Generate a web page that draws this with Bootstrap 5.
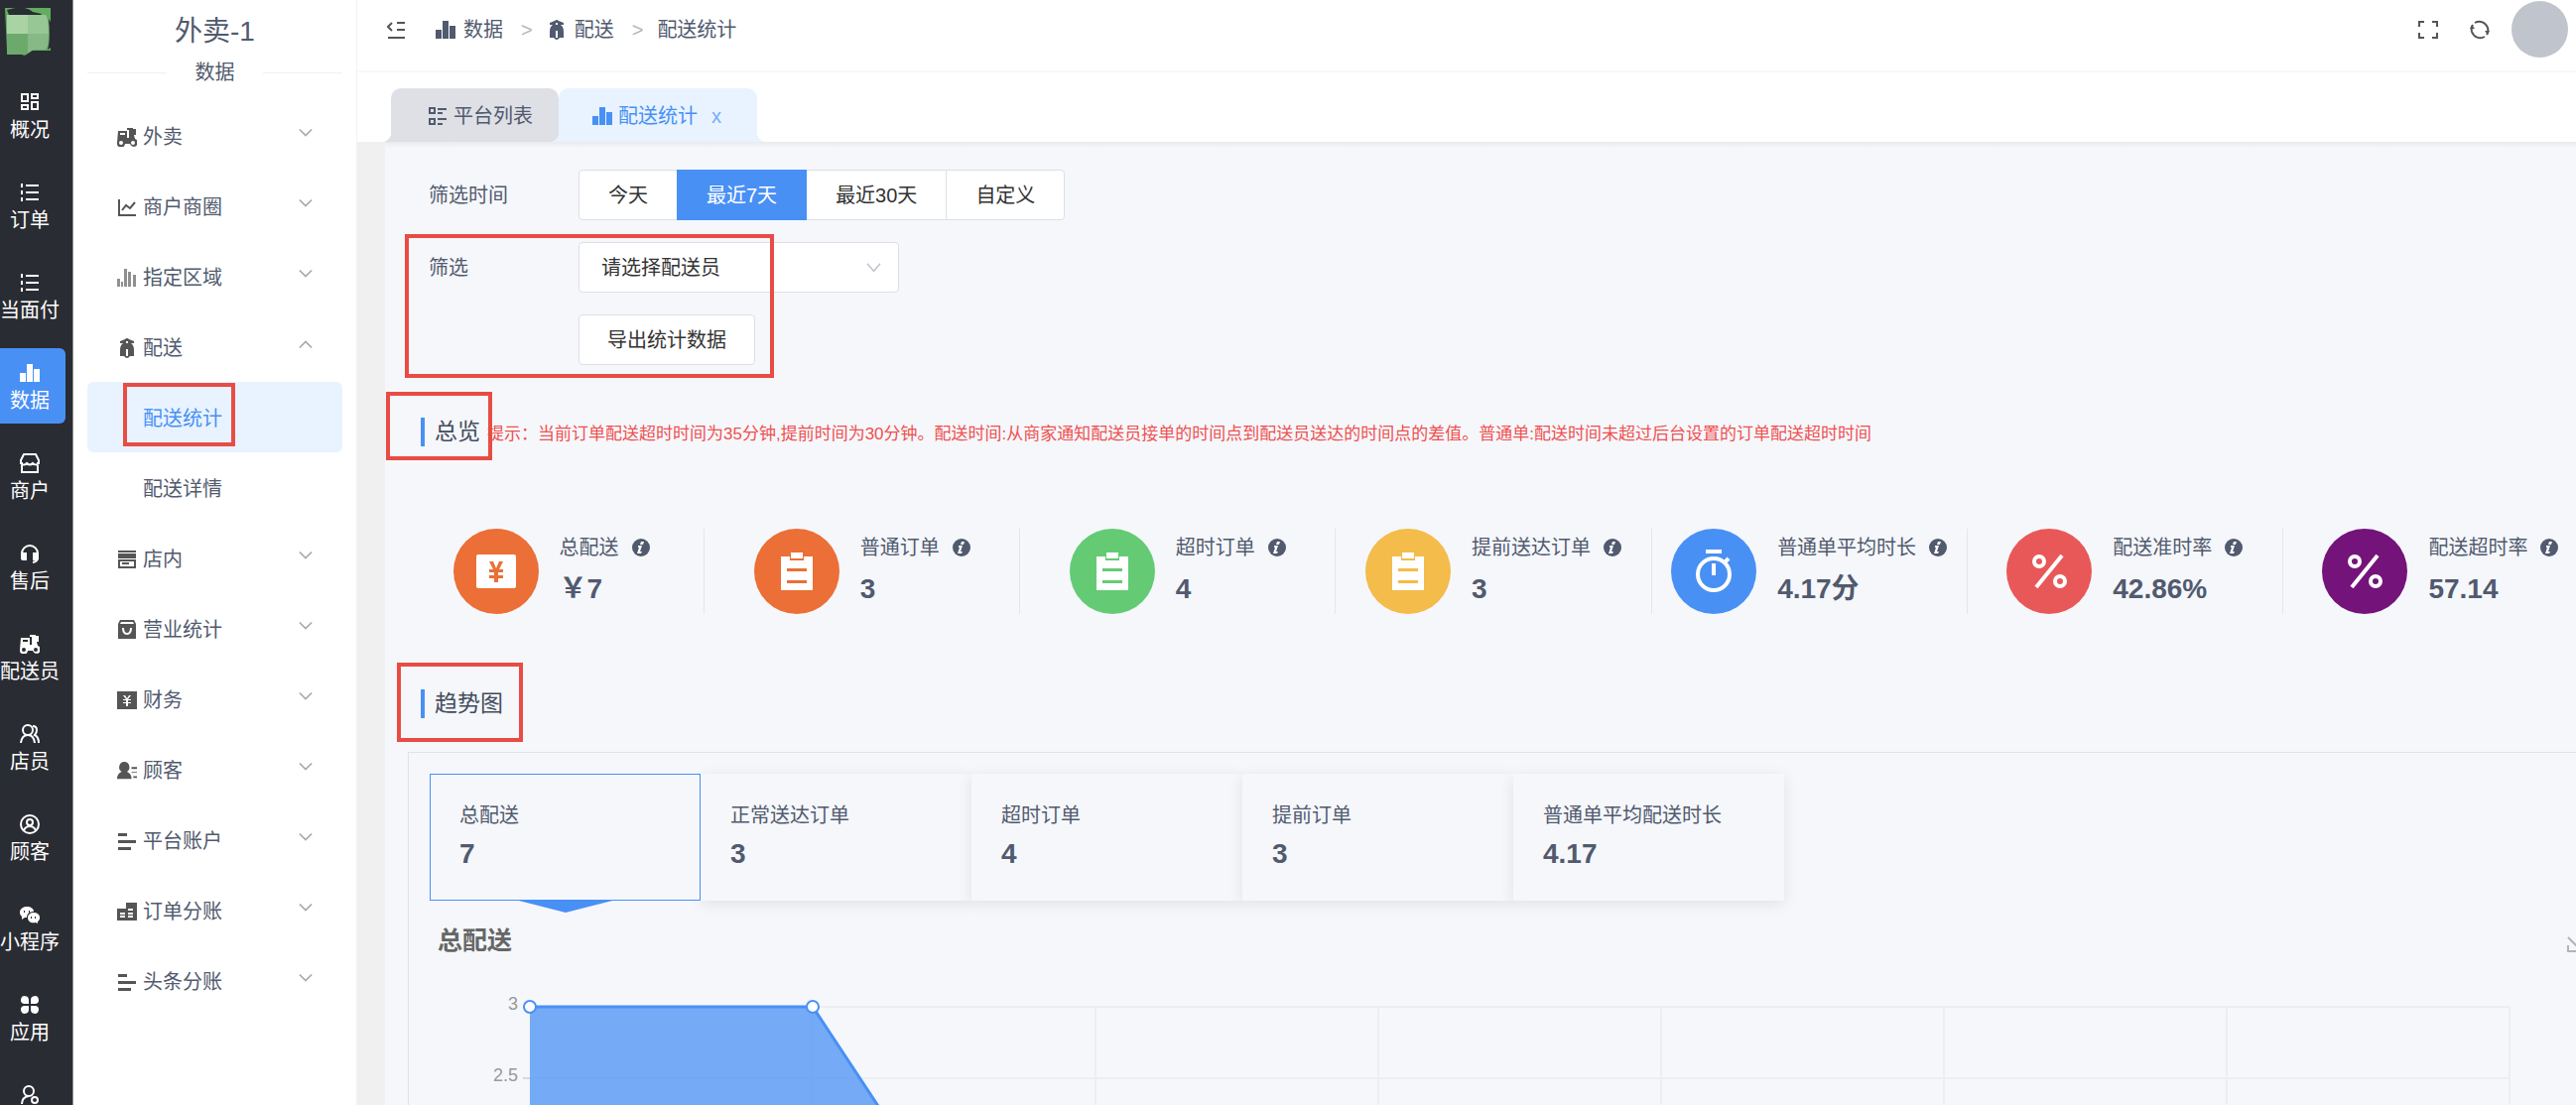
<!DOCTYPE html>
<html lang="zh-CN">
<head>
<meta charset="utf-8">
<meta name="viewport" content="width=device-width, initial-scale=1">
<title>配送统计</title>
<link href="https://cdn.jsdelivr.net/npm/bootstrap@5.3.0/dist/css/bootstrap.min.css" rel="stylesheet">
<style>
:root{--ink:#515a6e;--brand:#4990f5;--pale:#e8f3ff;--red:#e84c44;--page:#f5f7fb}
body{font:20px/28px "Liberation Sans","Noto Sans CJK SC",sans-serif;color:var(--ink);background:#fff}
a{color:inherit;text-decoration:none}
svg{display:block;flex:none}
.ico{width:20px;height:20px;fill:currentColor}
.shell{height:100vh}
/* dark rail */
.rail{width:74px;background:#2a2c33;border-right:1px solid #8f9196}
.logo{width:46px;height:50px;margin:7px 0 21px 5px}
.rail-list{gap:15px}
.rail-item{width:72px;height:76px;margin-left:-6px;padding-top:15px;gap:4px;color:#fff;border-radius:6px}
.rail-item.on{background:var(--brand)}
/* secondary menu */
.side{width:286px;padding:0 14px;border-right:1px solid #f2f2f2}
.side h1{font-size:28px;line-height:36px;margin:14px 0 9px;font-weight:400}
.rule{flex:0 0 80px;height:1px;background:#f0f0f2}
.menu{margin-top:14px}
.menu-item{height:71px;padding:3px 28px 0 30px;border-radius:6px}
.menu-item .ico{color:#555;margin-right:6px}
.menu-item .chev{color:#aaa;width:14px;height:14px;margin:-8px 2px 0 auto}
.menu-item.leaf{padding-left:56px}
.menu-item.on{background:var(--pale);color:var(--brand)}
/* red marker frames */
.framed{position:relative}
.framed::after{content:"";position:absolute;border:4px solid var(--red);pointer-events:none;z-index:3}
.frame-menu::after{left:36px;top:1px;width:113px;height:64px}
.frame-form::after{left:-24px;top:-8px;width:372px;height:145px}
.frame-over::after{left:-39px;top:-26px;width:107px;height:69px}
.frame-trend::after{left:-28px;top:-27px;width:127px;height:80px}
/* top bars */
.topbar{height:73px;padding:0 8px 12px 30px;border-bottom:2px solid #f8f8f9}
.crumb{gap:8px}
.sep{color:#b4b8c1;margin:0 14px 0 18px}
.tool{border:0;background:none;padding:0;color:#555}
.fold{margin-right:29px}
.reload{margin:0 22px 0 32px}
.avatar{width:57px;height:57px;background:#c0c4cc}
.tabs{height:70px;padding:16px 0 0 34px}
.tab-x{height:54px;position:relative;gap:6px;padding:2px 0 0;border-radius:10px 10px 0 0}
.tab-x::before,.tab-x::after{content:"";position:absolute;bottom:0;width:9px;height:9px}
.tab-x::before{left:-9px;background:radial-gradient(circle at 0 0,transparent 9px,var(--t) 9px)}
.tab-x::after{right:-9px;background:radial-gradient(circle at 100% 0,transparent 9px,var(--t) 9px)}
.tab-a{--t:#dfe0e6;background:var(--t);padding-left:37px;width:169px}
.tab-b{--t:#e8f3ff;background:var(--t);padding-left:34px;width:200px;color:var(--brand)}
.tab-b button{border:0;background:none;color:#78adf5;padding:0;margin-left:8px}
/* body */
.stage{background:#f0f0f0;padding-left:28px}
.sheet{background:linear-gradient(#e9eaee,var(--page) 6px);padding-top:28px;margin-right:-48px;min-height:100%}
.filters{padding-left:44px}
.f-label{width:151px}
.f-row{height:51px}
.f-row+.f-row,.filters .framed{margin-top:22px}
.btn-x{--bs-btn-font-size:20px;--bs-btn-line-height:28px;--bs-btn-padding-x:28px;--bs-btn-bg:#fff;--bs-btn-color:#333;--bs-btn-border-color:#dcdfe6;--bs-btn-border-radius:4px;height:51px}
.btn-group .btn-x{--bs-btn-padding-x:29px;--bs-btn-active-color:#fff;--bs-btn-active-bg:var(--brand);--bs-btn-active-border-color:var(--brand)}
.sel{width:323px;height:51px;font-size:20px;color:#333;border-color:#dcdfe6;border-radius:4px;padding:0 22px;background-color:#fff;background-position:right 17px center;background-size:15px;
background-image:url("data:image/svg+xml,%3Csvg xmlns='http://www.w3.org/2000/svg' viewBox='0 0 16 16'%3E%3Cpath d='M1 4l7 8 7-8' fill='none' stroke='%23c0c4cc' stroke-width='1.6'/%3E%3C/svg%3E")}
.sec{margin-left:36px;height:29px;border-left:4px solid var(--brand);padding-left:10px}
.sec h2{font-size:23px;line-height:29px;margin:0;font-weight:400;color:#444c5c}
.overview{margin-top:53px}
.tip{font-size:17px;color:#f04f4f;margin-left:7px;padding-top:4px}
.stats{margin:83px 26px 76px 3px}
.stat{width:calc(100% / 7);gap:21px;height:86px;border-left:1px solid #e4e6ea}
.stat:first-child{border-left:0;padding-left:11px}
.disc{width:86px;height:86px;color:#fff}
.disc .ico{width:48px;height:48px}
.stat-name{gap:13px;margin-top:5px}
.info{width:18px;height:18px}
.num{font-size:28px;line-height:32px;font-weight:700}
.stat .num{margin-top:12px}
.panel{margin:34px 10px 0 23px;border:1px solid #dfe2e8;padding:21px 21px 0}
.kpi{width:273px;height:128px;padding:27px 0 0 29px;border:1px solid transparent;background:var(--page);box-shadow:0 3px 14px rgba(0,0,0,.09);text-align:left;color:inherit}
.kpi .num{margin-top:9px}
.kpi.on{position:relative;z-index:1;border-color:var(--brand);box-shadow:none}
.kpi.on::after{content:"";position:absolute;left:85px;top:100%;border:solid transparent;border-width:13px 51px 0;border-top-color:var(--brand)}
.chart-head{margin:22px 3px 0 8px;height:36px}
.chart-head h3{font-size:25px;line-height:36px;margin:0;color:#666}
.plot-row{margin:49px 83px 0 0}
.ticks{width:101px;padding-right:12px;font-size:18px;line-height:20px;color:#999;text-align:right;margin-top:-13px}
.ticks div{height:72px}
.plot{height:432px;overflow:visible}
</style>
<script src="https://cdn.jsdelivr.net/npm/bootstrap@5.3.0/dist/js/bootstrap.bundle.min.js"></script>
</head>
<body class="overflow-hidden">
<svg width="0" height="0" class="position-absolute" aria-hidden="true">
<defs>
<symbol id="dash" viewBox="0 0 20 20"><path fill="none" stroke="currentColor" stroke-width="2" d="M2 2h6v7H2zM12 2h6v4h-6zM2 13h6v4H2zM12 10h6v7h-6z"/></symbol>
<symbol id="list" viewBox="0 0 20 20"><path d="M1 1h2v4H1zM1 8h2v4H1zM1 15h2v4H1zM6 2h13v2H6zM6 9h13v2H6zM6 16h13v2H6z"/></symbol>
<symbol id="bars" viewBox="0 0 20 20"><path d="M0 10h6v9H0zM7 1h6v18H7zM14 6h6v13h-6z"/></symbol>
<symbol id="shop" viewBox="0 0 20 20"><path fill="none" stroke="currentColor" stroke-width="2" d="M4 1h12l3 6v3h-1v9H2v-9H1V7zM1 10q3 3 6 0 3 3 6 0 3 3 6 0"/></symbol>
<symbol id="head" viewBox="0 0 20 20"><path fill="none" stroke="currentColor" stroke-width="2" d="M2 12V10a8 8 0 0 1 16 0v4q0 4-5 5"/><path d="M1 9h6v8H3q-2 0-2-2zM13 9h6v6q0 2-2 2h-4z"/></symbol>
<symbol id="scoot" viewBox="0 0 20 20"><path fill-rule="evenodd" d="M1 4h9v7h2V3h-2V1h6v1h3v6h-2l1 4a4 4 0 1 1-5 5H8a4 4 0 1 1-8-1zM3 6v2h5V6zM4 14a2 2 0 1 0 0 4 2 2 0 0 0 0-4zM16 14a2 2 0 1 0 0 4 2 2 0 0 0 0-4z"/></symbol>
<symbol id="users" viewBox="0 0 20 20"><g fill="none" stroke="currentColor" stroke-width="2"><circle cx="8" cy="6" r="5"/><path d="M1 19q1-8 7-8t7 8M13 2q4 0 4 4 0 3-2 5 4 2 4 8"/></g></symbol>
<symbol id="usero" viewBox="0 0 20 20"><g fill="none" stroke="currentColor" stroke-width="2"><circle cx="10" cy="10" r="9"/><circle cx="10" cy="8" r="3"/><path d="M4 16q2-4 6-4t6 4"/></g></symbol>
<symbol id="chat" viewBox="0 0 20 20"><path fill-rule="evenodd" d="M7 2c4 0 7 2 7 5-4 0-7 2-7 6H5l-3 2v-3C-2 9 0 2 7 2zM4 6v2h1V6zM9 6v2h1V6z"/><path fill-rule="evenodd" d="M14 8c6 0 8 6 4 9v2l-2-1c-5 1-8-1-8-5 0-3 3-5 6-5zM11 12v2h1v-2zM15 12v2h1v-2z"/></symbol>
<symbol id="apps" viewBox="0 0 20 20"><path d="M9 9H4a4 4 0 1 1 5-4zM11 9V5a4 4 0 1 1 5 4zM9 11v4a4 4 0 1 1-5-4zM11 11h5a4 4 0 1 1-5 4z"/></symbol>
<symbol id="userset" viewBox="0 0 20 20"><g fill="none" stroke="currentColor" stroke-width="2"><circle cx="9" cy="6" r="5"/><path d="M2 19q0-7 7-8"/><circle cx="15" cy="15" r="3"/></g></symbol>
<symbol id="trend" viewBox="0 0 20 20"><path fill="none" stroke="currentColor" stroke-width="2" d="M2 2v16h17M5 13l4-5 4 3 5-6"/></symbol>
<symbol id="bars5" viewBox="0 0 20 20"><path opacity=".65" d="M0 11h3v8H0zM4 14h2v5H4zM7 1h3v18H7zM11 4h3v15h-3zM16 7h3v12h-3z"/></symbol>
<symbol id="moto" viewBox="0 0 20 20"><path fill-rule="evenodd" d="M8 1q2-2 4 0l5 2v2h-3q3 2 3 7v6h-4q-3 4-6 0H3v-6q0-5 3-7H3V3zM9 3v2h2V3zM9 11v7h2v-7z"/></symbol>
<symbol id="store" viewBox="0 0 20 20"><path fill-rule="evenodd" d="M1 1h18v2H1zM1 4h18v5H1zM1 10h18v9H1zM3 12v5h14v-5zM5 13h7v2H5z"/></symbol>
<symbol id="bag" viewBox="0 0 20 20"><path fill-rule="evenodd" d="M3 0h14l2 4v15H1V4zM4 2L3 4h14l-1-2zM5 8q0 7 5 7t5-7h-2q0 5-3 5T7 8z"/></symbol>
<symbol id="money" viewBox="0 0 20 20"><path fill-rule="evenodd" d="M0 1h20v18H0zM6 5l3 4H6v1h3v2H6v1h3v3h2v-3h3v-1h-3v-2h3V9h-3l3-4h-2l-2 3-2-3z"/></symbol>
<symbol id="person" viewBox="0 0 22 20"><path d="M8 0a6 6 0 0 1 3 11q5 2 5 8H0q0-6 5-8A6 6 0 0 1 8 0zM16 6h6v2h-6zM16 11h6v1h-6zM18 16h4v2h-4z"/></symbol>
<symbol id="lines" viewBox="0 0 20 20"><path d="M1 2h9v3H1zM1 9h18v3H1zM1 16h13v3H1z"/></symbol>
<symbol id="build" viewBox="0 0 20 20"><path fill-rule="evenodd" d="M0 7h9V1h11v18H0zM3 11v2h5v-2zM3 14v2h5v-2zM11 7v2h5V7zM11 11v2h5v-2zM11 14v2h5v-2z"/></symbol>
<symbol id="grid" viewBox="0 0 20 20"><path fill-rule="evenodd" d="M1 1h7v7H1zM3 3v3h3V3zM1 12h7v7H1zM3 14v3h3v-3zM10 2h9v2h-9zM10 6h5v2h-5zM10 12h9v2h-9zM10 17h5v2h-5z"/></symbol>
<symbol id="down" viewBox="0 0 16 16"><path fill="none" stroke="currentColor" stroke-width="2" d="M1 4l7 7 7-7"/></symbol>
<symbol id="up" viewBox="0 0 16 16"><path fill="none" stroke="currentColor" stroke-width="2" d="M1 12l7-7 7 7"/></symbol>
<symbol id="clip" viewBox="0 0 48 48"><path fill-rule="evenodd" d="M8 9h9v4h14V9h9v34H8zM14 21v3h20v-3zM14 33v3h20v-3z"/><path d="M18 5h12v6H18z"/></symbol>
<symbol id="yen" viewBox="0 0 48 48"><path fill-rule="evenodd" d="M6 7h36q2 0 2 2v30q0 2-2 2H6q-2 0-2-2V9q0-2 2-2zM17 14l4 8h-4v3h5v3h-5v3h5v4h4v-4h5v-3h-5v-3h5v-3h-4l4-8h-4l-3 7-3-7z"/></symbol>
<symbol id="watch" viewBox="0 0 48 48"><path fill="none" stroke="currentColor" stroke-width="4" d="M16 4h16M24 16v12M36 14l3-3"/><circle cx="24" cy="27" r="16" fill="none" stroke="currentColor" stroke-width="4"/></symbol>
<symbol id="pct" viewBox="0 0 48 48"><g fill="none" stroke="currentColor" stroke-width="4"><circle cx="14" cy="14" r="5"/><circle cx="35" cy="34" r="5"/><path d="M37 8L11 40"/></g></symbol>
<symbol id="info" viewBox="0 0 18 18"><circle cx="9" cy="9" r="9"/><path fill="#fff" d="M9 3h3l-1 3H8zM6 7h4l-2 6h2l-1 2H5l2-6H6z"/></symbol>
</defs>
</svg>

<div class="shell d-flex overflow-hidden">
  <nav class="rail flex-shrink-0 overflow-hidden">
    <svg class="logo" viewBox="0 0 46 50"><path fill="#62ad60" d="M0 1h46v43H2z"/><path fill="#a9d3a5" d="M2 8h21v19H2z"/><path fill="#97c794" d="M23 8h18q3 3 3 19H23z"/><path fill="#6caa6c" d="M2 27h21v20q-3 3-6 1H2z"/><path fill="#86b986" d="M23 27h21q0 15-4 16H29l-6 4z"/><path fill="#2a2c33" d="M2 3q17-6 26 2l9 2-1 1H4zM44 12l2 3v26l-3 2q3-10 1-31z"/></svg>
    <div class="rail-list d-flex flex-column">
      <a href="#" class="rail-item d-flex flex-column align-items-center"><svg class="ico"><use href="#dash"/></svg>概况</a>
      <a href="#" class="rail-item d-flex flex-column align-items-center"><svg class="ico"><use href="#list"/></svg>订单</a>
      <a href="#" class="rail-item d-flex flex-column align-items-center"><svg class="ico"><use href="#list"/></svg>当面付</a>
      <a href="#" class="rail-item on d-flex flex-column align-items-center"><svg class="ico"><use href="#bars"/></svg>数据</a>
      <a href="#" class="rail-item d-flex flex-column align-items-center"><svg class="ico"><use href="#shop"/></svg>商户</a>
      <a href="#" class="rail-item d-flex flex-column align-items-center"><svg class="ico"><use href="#head"/></svg>售后</a>
      <a href="#" class="rail-item d-flex flex-column align-items-center"><svg class="ico"><use href="#scoot"/></svg>配送员</a>
      <a href="#" class="rail-item d-flex flex-column align-items-center"><svg class="ico"><use href="#users"/></svg>店员</a>
      <a href="#" class="rail-item d-flex flex-column align-items-center"><svg class="ico"><use href="#usero"/></svg>顾客</a>
      <a href="#" class="rail-item d-flex flex-column align-items-center"><svg class="ico"><use href="#chat"/></svg>小程序</a>
      <a href="#" class="rail-item d-flex flex-column align-items-center"><svg class="ico"><use href="#apps"/></svg>应用</a>
      <a href="#" class="rail-item d-flex flex-column align-items-center"><svg class="ico"><use href="#userset"/></svg></a>
    </div>
  </nav>

  <aside class="side flex-shrink-0">
    <h1 class="text-center">外卖-1</h1>
    <div class="d-flex align-items-center justify-content-between"><span class="rule"></span>数据<span class="rule"></span></div>
    <nav class="menu">
      <a href="#" class="menu-item d-flex align-items-center"><svg class="ico"><use href="#scoot"/></svg>外卖<svg class="chev"><use href="#down"/></svg></a>
      <a href="#" class="menu-item d-flex align-items-center"><svg class="ico"><use href="#trend"/></svg>商户商圈<svg class="chev"><use href="#down"/></svg></a>
      <a href="#" class="menu-item d-flex align-items-center"><svg class="ico"><use href="#bars5"/></svg>指定区域<svg class="chev"><use href="#down"/></svg></a>
      <a href="#" class="menu-item d-flex align-items-center"><svg class="ico"><use href="#moto"/></svg>配送<svg class="chev"><use href="#up"/></svg></a>
      <a href="#" class="menu-item leaf on framed frame-menu d-flex align-items-center">配送统计</a>
      <a href="#" class="menu-item leaf d-flex align-items-center">配送详情</a>
      <a href="#" class="menu-item d-flex align-items-center"><svg class="ico"><use href="#store"/></svg>店内<svg class="chev"><use href="#down"/></svg></a>
      <a href="#" class="menu-item d-flex align-items-center"><svg class="ico"><use href="#bag"/></svg>营业统计<svg class="chev"><use href="#down"/></svg></a>
      <a href="#" class="menu-item d-flex align-items-center"><svg class="ico"><use href="#money"/></svg>财务<svg class="chev"><use href="#down"/></svg></a>
      <a href="#" class="menu-item d-flex align-items-center"><svg class="ico"><use href="#person"/></svg>顾客<svg class="chev"><use href="#down"/></svg></a>
      <a href="#" class="menu-item d-flex align-items-center"><svg class="ico"><use href="#lines"/></svg>平台账户<svg class="chev"><use href="#down"/></svg></a>
      <a href="#" class="menu-item d-flex align-items-center"><svg class="ico"><use href="#build"/></svg>订单分账<svg class="chev"><use href="#down"/></svg></a>
      <a href="#" class="menu-item d-flex align-items-center"><svg class="ico"><use href="#lines"/></svg>头条分账<svg class="chev"><use href="#down"/></svg></a>
    </nav>
  </aside>

  <div class="flex-grow-1 d-flex flex-column overflow-hidden">
    <header class="topbar flex-shrink-0 d-flex align-items-center justify-content-between">
      <div class="d-flex align-items-center">
        <button class="tool fold" aria-label="收起菜单"><svg class="ico" viewBox="0 0 20 20"><path fill="none" stroke="currentColor" stroke-width="2" d="M5 3L1 7l4 4M10 3h8M10 10h8M1 18h17"/></svg></button>
        <nav class="d-flex align-items-center">
          <a href="#" class="crumb d-flex align-items-center"><svg class="ico"><use href="#bars"/></svg>数据</a><span class="sep">&gt;</span>
          <a href="#" class="crumb d-flex align-items-center"><svg class="ico"><use href="#moto"/></svg>配送</a><span class="sep">&gt;</span>
          <span>配送统计</span>
        </nav>
      </div>
      <div class="d-flex align-items-center">
        <button class="tool" aria-label="全屏"><svg class="ico" viewBox="0 0 20 20"><path fill="none" stroke="currentColor" stroke-width="2" d="M1 7V2h5M14 2h5v5M19 13v5h-5M6 18H1v-5"/></svg></button>
        <button class="tool reload" aria-label="刷新"><svg class="ico" viewBox="0 0 20 20"><path fill="none" stroke="currentColor" stroke-width="2" d="M2 12A9 9 0 0 1 3 5M5 3A9 9 0 0 1 18 8M18 8A9 9 0 0 1 17 15M15 17A9 9 0 0 1 2 12"/><path d="M0 9l2-4 3 4zM15 11h5l-2 4z"/></svg></button>
        <div class="avatar rounded-circle"></div>
      </div>
    </header>
    <div class="tabs flex-shrink-0 d-flex">
      <a href="#" class="tab-x tab-a d-flex align-items-center"><svg class="ico"><use href="#grid"/></svg>平台列表</a>
      <div class="tab-x tab-b d-flex align-items-center"><svg class="ico"><use href="#bars"/></svg><a href="#">配送统计</a><button aria-label="关闭">x</button></div>
    </div>
    <main class="stage flex-grow-1 overflow-hidden">
      <div class="sheet">
        <form class="filters">
          <div class="f-row d-flex align-items-center">
            <span class="f-label">筛选时间</span>
            <div class="btn-group" role="group" aria-label="筛选时间">
              <button type="button" class="btn btn-x">今天</button>
              <button type="button" class="btn btn-x active">最近7天</button>
              <button type="button" class="btn btn-x">最近30天</button>
              <button type="button" class="btn btn-x">自定义</button>
            </div>
          </div>
          <div class="framed frame-form">
            <div class="f-row d-flex align-items-center">
              <label class="f-label" for="rider">筛选</label>
              <select id="rider" class="form-select sel"><option>请选择配送员</option></select>
            </div>
            <div class="f-row d-flex align-items-center">
              <span class="f-label"></span>
              <button type="button" class="btn btn-x">导出统计数据</button>
            </div>
          </div>
        </form>

        <div class="sec overview framed frame-over d-flex align-items-center"><h2>总览</h2><span class="tip">提示：当前订单配送超时时间为35分钟,提前时间为30分钟。配送时间:从商家通知配送员接单的时间点到配送员送达的时间点的差值。普通单:配送时间未超过后台设置的订单配送超时时间</span></div>

        <div class="stats d-flex">
          <div class="stat d-flex justify-content-center"><div class="disc rounded-circle d-flex align-items-center justify-content-center" style="background:#eb6f36"><svg class="ico"><use href="#yen"/></svg></div><div><div class="stat-name d-flex align-items-center">总配送<svg class="info" fill="currentColor"><use href="#info"/></svg></div><div class="num">￥7</div></div></div>
          <div class="stat d-flex justify-content-center"><div class="disc rounded-circle d-flex align-items-center justify-content-center" style="background:#eb6f36"><svg class="ico"><use href="#clip"/></svg></div><div><div class="stat-name d-flex align-items-center">普通订单<svg class="info" fill="currentColor"><use href="#info"/></svg></div><div class="num">3</div></div></div>
          <div class="stat d-flex justify-content-center"><div class="disc rounded-circle d-flex align-items-center justify-content-center" style="background:#64cb74"><svg class="ico"><use href="#clip"/></svg></div><div><div class="stat-name d-flex align-items-center">超时订单<svg class="info" fill="currentColor"><use href="#info"/></svg></div><div class="num">4</div></div></div>
          <div class="stat d-flex justify-content-center"><div class="disc rounded-circle d-flex align-items-center justify-content-center" style="background:#f3bc4b"><svg class="ico"><use href="#clip"/></svg></div><div><div class="stat-name d-flex align-items-center">提前送达订单<svg class="info" fill="currentColor"><use href="#info"/></svg></div><div class="num">3</div></div></div>
          <div class="stat d-flex justify-content-center"><div class="disc rounded-circle d-flex align-items-center justify-content-center" style="background:#4990f5"><svg class="ico"><use href="#watch"/></svg></div><div><div class="stat-name d-flex align-items-center">普通单平均时长<svg class="info" fill="currentColor"><use href="#info"/></svg></div><div class="num">4.17分</div></div></div>
          <div class="stat d-flex justify-content-center"><div class="disc rounded-circle d-flex align-items-center justify-content-center" style="background:#e95858"><svg class="ico"><use href="#pct"/></svg></div><div><div class="stat-name d-flex align-items-center">配送准时率<svg class="info" fill="currentColor"><use href="#info"/></svg></div><div class="num">42.86%</div></div></div>
          <div class="stat d-flex justify-content-center"><div class="disc rounded-circle d-flex align-items-center justify-content-center" style="background:#74137a"><svg class="ico"><use href="#pct"/></svg></div><div><div class="stat-name d-flex align-items-center">配送超时率<svg class="info" fill="currentColor"><use href="#info"/></svg></div><div class="num">57.14</div></div></div>
        </div>

        <div class="sec framed frame-trend d-flex align-items-center"><h2>趋势图</h2></div>

        <section class="panel">
          <div class="d-flex">
            <button class="kpi on d-flex flex-column"><span>总配送</span><span class="num">7</span></button>
            <button class="kpi d-flex flex-column"><span>正常送达订单</span><span class="num">3</span></button>
            <button class="kpi d-flex flex-column"><span>超时订单</span><span class="num">4</span></button>
            <button class="kpi d-flex flex-column"><span>提前订单</span><span class="num">3</span></button>
            <button class="kpi d-flex flex-column"><span>普通单平均配送时长</span><span class="num">4.17</span></button>
          </div>
          <div class="chart-head d-flex align-items-center justify-content-between">
            <h3 class="fw-bold">总配送</h3>
            <button class="tool" aria-label="下载"><svg width="22" height="24" viewBox="0 0 22 24"><path fill="none" stroke="#b4b4b4" stroke-width="2" d="M10 0v18M1 9l9 9 9-9M1 17v6h19v-6"/></svg></button>
          </div>
          <div class="plot-row d-flex">
            <div class="ticks flex-shrink-0"><div>3</div><div>2.5</div></div>
            <svg class="plot flex-grow-1 flex-shrink-1 w-100">
              <g stroke="#eceef0" stroke-width="2">
                <path d="M-7 72h7" stroke="#d5d8dc"/>
                <line x1="0" x2="100%" y1="0" y2="0"/><line x1="0" x2="100%" y1="72" y2="72"/><line x1="0" x2="100%" y1="144" y2="144"/>
                <line x1="14.286%" x2="14.286%" y1="0" y2="432"/><line x1="28.571%" x2="28.571%" y1="0" y2="432"/><line x1="42.857%" x2="42.857%" y1="0" y2="432"/><line x1="57.143%" x2="57.143%" y1="0" y2="432"/><line x1="71.429%" x2="71.429%" y1="0" y2="432"/><line x1="85.714%" x2="85.714%" y1="0" y2="432"/><line x1="100%" x2="100%" y1="0" y2="432"/>
              </g>
              <svg width="100%" height="432" viewBox="0 0 7 3" preserveAspectRatio="none" overflow="visible">
                <path d="M0 0h1l1 3H0z" fill="#4990f5" fill-opacity=".75"/>
                <path d="M0 0h1l1 3" fill="none" stroke="#4990f5" stroke-width="3" vector-effect="non-scaling-stroke"/>
              </svg>
              <g fill="#fff" stroke="#4990f5" stroke-width="2"><circle cx="0" cy="0" r="6"/><circle cx="14.286%" cy="0" r="6"/></g>
            </svg>
          </div>
        </section>
      </div>
    </main>
  </div>
</div>
</body>
</html>
